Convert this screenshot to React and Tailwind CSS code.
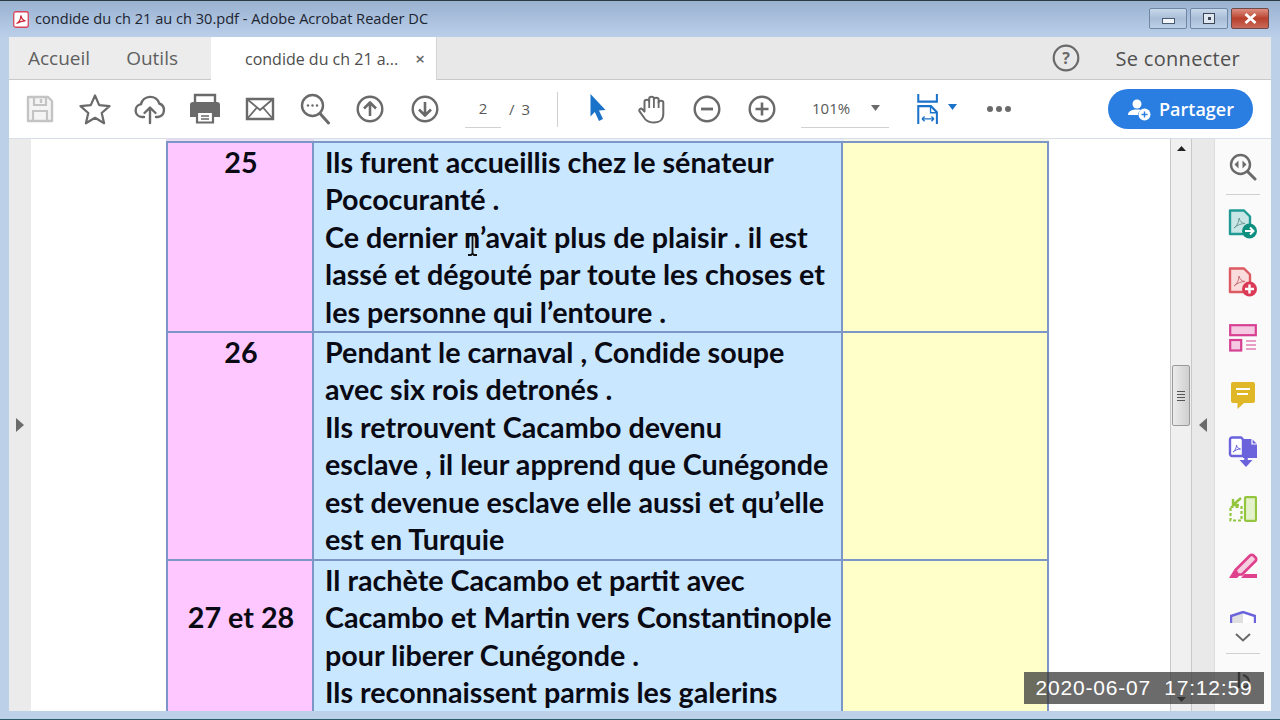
const G = '#6a6a6a';

function Slot({ children, w = 'w-[55px]' }) {
  return <div className={`${w} h-full flex items-center justify-center shrink-0`}>{children}</div>;
}

function Ico({ size = 32, vb = 32, children, className = '' }) {
  return (
    <svg width={size} height={size} viewBox={`0 0 ${vb} ${vb}`} fill="none" className={className}>
      {children}
    </svg>
  );
}

const SaveI = () => (
  <Ico>
    <path d="M4 4h20l4 4v20H4z" fill="#f4f4f4" stroke="#c4c4c4" strokeWidth="2.4" strokeLinejoin="round" />
    <path d="M10 4v8h12V4M9 28V18h14v10" stroke="#c4c4c4" strokeWidth="2.2" />
    <path d="M17 6v4" stroke="#c4c4c4" strokeWidth="2.4" />
  </Ico>
);
const StarI = () => (
  <Ico>
    <path d="M16 2.5l4.2 9.6 10.3 1-7.8 6.9 2.4 10.3L16 24.8l-9.1 5.5 2.4-10.3-7.8-6.9 10.3-1z" stroke={G} strokeWidth="2.2" strokeLinejoin="round" />
  </Ico>
);
const CloudI = () => (
  <Ico>
    <path d="M10 24H8a6.5 6.5 0 0 1-1-12.9 9.5 9.5 0 0 1 18.3-.6A7 7 0 0 1 24 24h-2" stroke={G} strokeWidth="2.4" strokeLinecap="round" />
    <path d="M16 30V15M10.5 20l5.5-5.5 5.5 5.5" stroke={G} strokeWidth="2.4" strokeLinecap="round" strokeLinejoin="round" />
  </Ico>
);
const PrintI = () => (
  <Ico>
    <path d="M6 9V2h20v7" stroke={G} strokeWidth="2.4" />
    <path d="M4 9h24a3 3 0 0 1 3 3v12h-6v-6H7v6H1V12a3 3 0 0 1 3-3z" fill={G} />
    <path d="M8 19h16v10.5H8z" fill="#fff" stroke={G} strokeWidth="2.2" />
    <path d="M12 23h8M12 26h8" stroke={G} strokeWidth="1.6" />
  </Ico>
);
const MailI = () => (
  <Ico>
    <path d="M3 6h26v20H3z" stroke={G} strokeWidth="2.4" />
    <path d="M3 6l13 11L29 6M3 26l10-11.5M29 26L19 14.5" stroke={G} strokeWidth="1.8" />
  </Ico>
);
const FindI = () => (
  <Ico>
    <circle cx="13.5" cy="12.5" r="10.5" stroke={G} strokeWidth="2.4" />
    <path d="M21 20.5L29.5 30" stroke={G} strokeWidth="3" strokeLinecap="round" />
    <circle cx="9" cy="12.5" r="1.2" fill={G} />
    <circle cx="13.5" cy="12.5" r="1.2" fill={G} />
    <circle cx="18" cy="12.5" r="1.2" fill={G} />
  </Ico>
);
const CircleI = ({ children }) => (
  <Ico>
    <circle cx="16" cy="16" r="12.3" stroke={G} strokeWidth="2.4" />
    {children}
  </Ico>
);
const UpI = () => (
  <CircleI>
    <path d="M16 23V9.5M10 15.5l6-6 6 6" stroke={G} strokeWidth="2.6" strokeLinejoin="round" />
  </CircleI>
);
const DownI = () => (
  <CircleI>
    <path d="M16 9v13.5M10 16.5l6 6 6-6" stroke={G} strokeWidth="2.6" strokeLinejoin="round" />
  </CircleI>
);
const MinusI = () => (
  <CircleI>
    <path d="M10 16h12" stroke={G} strokeWidth="2.8" />
  </CircleI>
);
const PlusI = () => (
  <CircleI>
    <path d="M9.5 16h13M16 9.5v13" stroke={G} strokeWidth="2.6" />
  </CircleI>
);
const ArrowI = () => (
  <Ico>
    <path d="M9.5 1L24.5 17l-6.5.5L22 26l-4 2-4.2-9-4.3 4.5z" fill="#1b72c9" />
  </Ico>
);
const HandI = () => (
  <svg width="28" height="29" viewBox="0 0 28 29" fill="none">
    <path
      d="M7 24C5 21 3 18.5 1.6 16.4C.5 14.5 2.8 12.8 4.3 14.2L6.5 16.5V6.5C6.5 4 11.2 4 11.2 6.5V3.5C11.2 1 15.9 1 15.9 3.5V4.5C15.9 2 20.6 2 20.6 4.5V7.5C20.6 5 25.3 5 25.3 7.5V19C25.3 24.5 21.5 27.5 16.5 27.5C12 27.5 9 26.5 7 24Z"
      stroke={G}
      strokeWidth="2"
      strokeLinejoin="round"
    />
    <path d="M11.2 6.5V13M15.9 4V13M20.6 7V13" stroke={G} strokeWidth="1.8" />
  </svg>
);
const FitI = () => (
  <svg width="22" height="30" viewBox="0 0 26 32" fill="none" preserveAspectRatio="none">
    <path d="M1.5 0v8h22V0" stroke="#1b72c9" strokeWidth="2.4" />
    <path d="M1.5 32V13h15l7 6.5V32" stroke="#1b72c9" strokeWidth="2.4" />
    <path d="M16 13v7h7.5" stroke="#1b72c9" strokeWidth="1.6" />
    <path d="M6 26.5h14M6 26.5l3-2.5M6 26.5L9 29M20 26.5L17 24M20 26.5L17 29" stroke="#1b72c9" strokeWidth="1.5" />
  </svg>
);
const Caret = ({ color = G }) => (
  <svg width="9" height="6" viewBox="0 0 9 6">
    <path d="M0 0h9L4.5 6z" fill={color} />
  </svg>
);

function WinBtn({ children }) {
  return (
    <div className="w-[38px] h-[21px] rounded-[2px] border border-[#6f87a4] bg-gradient-to-b from-[#c8d8ec] via-[#a9bdd6] to-[#bcd0e8] flex items-center justify-center">
      {children}
    </div>
  );
}

function TitleBar() {
  return (
    <div className="h-[36px] flex items-center shrink-0 pl-[13px] pr-[11px] bg-gradient-to-b from-[#99b2d0] to-[#bbcfea]">
      <svg width="16" height="17" viewBox="0 0 16 17" className="mr-[6px]">
        <rect x="0.75" y="0.75" width="14.5" height="15.5" rx="2" fill="#fff" stroke="#d8455a" strokeWidth="1.3" />
        <path d="M3.5 12.5c2.5-1 4.5-4.5 4.3-8 .8 3.5 2 5 4.7 5.3-3-.2-6 .8-9 2.7z" fill="none" stroke="#cc2233" strokeWidth="1.2" />
      </svg>
      <span className="text-[14.6px] text-[#1c2430] font-['Open_Sans',sans-serif]">condide du ch 21 au ch 30.pdf - Adobe Acrobat Reader DC</span>
      <div className="ml-auto flex items-start gap-[3px] mt-[-1px]">
        <WinBtn>
          <div className="w-[13px] h-[6px] bg-[#f2f5f9] border border-[#4a5a70] mt-[4px]" />
        </WinBtn>
        <WinBtn>
          <div className="w-[12px] h-[11px] bg-[#dfe7f1] border border-[#3d4756] flex items-center justify-center">
            <div className="w-[3px] h-[3px] bg-[#3d4756]" />
          </div>
        </WinBtn>
        <div className="w-[38px] h-[21px] rounded-[2px] border border-[#6e4a4a] bg-gradient-to-b from-[#dd8d80] via-[#b8402c] to-[#c96a58] flex items-center justify-center">
          <svg width="13" height="11" viewBox="0 0 13 11">
            <path d="M1.5 1l10 9M11.5 1l-10 9" stroke="#fff" strokeWidth="2.8" />
          </svg>
        </div>
      </div>
    </div>
  );
}

function TabBar() {
  return (
    <div className="h-[43px] shrink-0 flex bg-[#e8e8e8] border-b border-[#c9c9c9] font-['Open_Sans',sans-serif]">
      <div className="w-[202px] flex items-center pl-[19px] gap-[36px] text-[19px] text-[#5f5f5f] bg-[#ececec]">
        <span>Accueil</span>
        <span>Outils</span>
      </div>
      <div className="w-[226px] h-[43px] bg-white flex items-center pl-[34px] text-[16px] text-[#4d4d4d] border-r border-[#d4d4d4]">
        <span>condide du ch 21 a...</span>
        <span className="ml-[17px] text-[#666] text-[17px] leading-none font-semibold">×</span>
      </div>
      <div className="flex-1 flex items-center justify-end pr-[31px]">
        <svg width="28" height="28" viewBox="0 0 28 28" fill="none" className="mr-[36px]">
          <circle cx="14" cy="14" r="12.3" stroke={G} strokeWidth="2.2" />
          <text x="14" y="19.5" textAnchor="middle" fontSize="16" fontWeight="700" fill={G} fontFamily="Open Sans, sans-serif">?</text>
        </svg>
        <span className="text-[20px] text-[#4f4f4f] font-medium tracking-[0.3px] pt-[2px]">Se connecter</span>
      </div>
    </div>
  );
}

function Toolbar() {
  return (
    <div className="h-[59px] shrink-0 bg-white flex items-center pl-[3px] border-b border-[#d9dfe9] font-['Open_Sans',sans-serif] text-[#595959]">
      <Slot><SaveI /></Slot>
      <Slot><StarI /></Slot>
      <Slot><CloudI /></Slot>
      <Slot><PrintI /></Slot>
      <Slot><MailI /></Slot>
      <Slot><FindI /></Slot>
      <Slot><UpI /></Slot>
      <Slot><DownI /></Slot>
      <div className="ml-[13px] w-[36px] h-[37px] border-b border-[#d2d2d2] flex items-center justify-center text-[15px] shrink-0">2</div>
      <div className="ml-[8px] text-[15px] w-[48px] shrink-0 tracking-[1.5px]">/ 3</div>
      <div className="w-px h-[35px] bg-[#d0d0d0] shrink-0" />
      <div className="ml-[11px] flex h-full">
        <Slot><ArrowI /></Slot>
        <Slot><HandI /></Slot>
        <Slot><MinusI /></Slot>
        <Slot><PlusI /></Slot>
      </div>
      <div className="ml-[12px] w-[88px] h-[37px] border-b border-[#d2d2d2] flex items-center pl-[11px] text-[15px] shrink-0">
        <span>101%</span>
        <span className="ml-[21px] mb-[1px] flex"><Caret /></span>
      </div>
      <div className="ml-[28px] flex items-center shrink-0">
        <FitI />
        <span className="ml-[9px] mb-[4px] flex"><Caret color="#1b72c9" /></span>
      </div>
      <div className="ml-[30px] flex gap-[3px] shrink-0">
        <div className="w-[6px] h-[6px] rounded-full bg-[#6a6a6a]" />
        <div className="w-[6px] h-[6px] rounded-full bg-[#6a6a6a]" />
        <div className="w-[6px] h-[6px] rounded-full bg-[#6a6a6a]" />
      </div>
      <button className="ml-[97px] w-[145px] h-[40px] rounded-full bg-[#2a7de1] text-white flex items-center justify-center gap-[8px] text-[18px] font-semibold shrink-0">
        <svg width="24" height="24" viewBox="0 0 24 24">
          <circle cx="10" cy="7" r="4.5" fill="#fff" />
          <path d="M1 18c0-4 4-5.5 9-5.5 1.5 0 2.8.1 4 .5-2 1-3 3-3 5z" fill="#fff" />
          <circle cx="17.5" cy="17.5" r="6" fill="#fff" />
          <path d="M14.5 17.5h6M17.5 14.5v6" stroke="#2a7de1" strokeWidth="1.4" />
        </svg>
        <span>Partager</span>
      </button>
    </div>
  );
}

const rows = [
  {
    n: '25',
    h: 'h-[190px]',
    nClass: 'pt-[1px]',
    lines: ['Ils furent accueillis chez le sénateur', 'Pococuranté .', 'Ce dernier n’avait plus de plaisir . il est', 'lassé et dégouté par toute les choses et', 'les personne qui l’entoure .'],
  },
  {
    n: '26',
    h: 'h-[228px]',
    nClass: 'pt-[1px]',
    lines: ['Pendant le carnaval , Condide soupe', 'avec six rois detronés .', 'Ils retrouvent Cacambo devenu', 'esclave , il leur apprend que Cunégonde', 'est devenue esclave elle aussi et qu’elle', 'est en Turquie'],
  },
  {
    n: '27 et 28',
    h: 'h-[190px]',
    nClass: 'pt-[38px]',
    lines: ['Il rachète Cacambo et partit avec', 'Cacambo et Martin vers Constantinople', 'pour liberer Cunégonde .', 'Ils reconnaissent parmis les galerins'],
  },
];

function Table() {
  return (
    <div className="w-[883px] ml-[135px] shrink-0 font-['Lato',sans-serif] font-bold text-[28.7px] leading-[37.4px] text-[#0a0a14]">
      <div className="h-[2px] grid grid-cols-[148px_530px_205px]">
        <div className="bg-[#eadcf0]" />
        <div className="bg-[#e6eef8]" />
        <div className="bg-[#f6f6e6]" />
      </div>
      <div className="border-l-2 border-t-2 border-[#7d96c8]">
        {rows.map((r) => (
          <div key={r.n} className={`grid grid-cols-[146px_529px_206px] ${r.h} border-b-2 border-[#7d96c8]`}>
            <div className={`bg-[#ffc7ff] text-center border-r-2 border-[#7d96c8] pl-[2px] ${r.nClass}`}>{r.n}</div>
            <div className="bg-[#c9e7ff] border-r-2 border-[#7d96c8] pl-[11px] pt-[1px] whitespace-nowrap overflow-hidden">
              {r.lines.map((l) => (
                <div key={l}>{l}</div>
              ))}
            </div>
            <div className="bg-[#ffffca] border-r-2 border-[#7d96c8]" />
          </div>
        ))}
      </div>
    </div>
  );
}

const RailSlot = ({ h, children }) => <div className={`${h} shrink-0 flex items-center justify-center`}>{children}</div>;

function Rail() {
  return (
    <div className="w-[57px] shrink-0 bg-[#fbfafa] flex flex-col items-stretch overflow-hidden border-l border-[#dedede]">
      <RailSlot h="h-[55px]">
        <svg width="28" height="28" viewBox="0 0 28 28" fill="none">
          <circle cx="11.5" cy="11.5" r="9.5" stroke={G} strokeWidth="2.4" />
          <path d="M18.5 18.5L26 26" stroke={G} strokeWidth="3" strokeLinecap="round" />
          <path d="M9.5 7.5v8L5.5 11.5zM13.5 7.5v8l4-4z" fill={G} />
        </svg>
      </RailSlot>
      <div className="h-px bg-[#cfcfcf] mx-[11px] shrink-0" />
      <RailSlot h="h-[58px]">
        <svg width="30" height="30" viewBox="0 0 30 30" fill="none">
          <path d="M2 1.5h14l6 6V25H2z" fill="#c9e6e6" stroke="#1f9a94" strokeWidth="2.4" strokeLinejoin="round" />
          <path d="M6 19c3-2 5-6 5-10 1 3.5 2.5 5 6 5.5-4 0-7.5 1.5-11 4.5z" stroke="#6d9a9a" strokeWidth="1" />
          <circle cx="21.5" cy="22" r="7.5" fill="#0f8f80" />
          <path d="M17 22h8M22 18.5l3.5 3.5-3.5 3.5" stroke="#fff" strokeWidth="2" />
        </svg>
      </RailSlot>
      <RailSlot h="h-[57px]">
        <svg width="30" height="30" viewBox="0 0 30 30" fill="none">
          <path d="M2 1.5h14l6 6V25H2z" fill="#fbdcdc" stroke="#dc5a62" strokeWidth="2.4" strokeLinejoin="round" />
          <path d="M6 19c3-2 5-6 5-10 1 3.5 2.5 5 6 5.5-4 0-7.5 1.5-11 4.5z" stroke="#c87078" strokeWidth="1" />
          <circle cx="21.5" cy="22" r="7.5" fill="#da3a55" />
          <path d="M17 22h9M21.5 17.5v9" stroke="#fff" strokeWidth="2.4" />
        </svg>
      </RailSlot>
      <RailSlot h="h-[56px]">
        <svg width="28" height="28" viewBox="0 0 28 28" fill="none">
          <rect x="1.2" y="1.2" width="25.6" height="10" fill="#f5c9e2" stroke="#d63f92" strokeWidth="2.2" />
          <rect x="1.2" y="16" width="11" height="10.5" fill="#f5c9e2" stroke="#d63f92" strokeWidth="2.2" />
          <path d="M17 17h10M17 21h10M17 25h10" stroke="#d63f92" strokeWidth="1" />
        </svg>
      </RailSlot>
      <RailSlot h="h-[57px]">
        <svg width="26" height="28" viewBox="0 0 26 28">
          <path d="M3 1h20a2 2 0 0 1 2 2v17a2 2 0 0 1-2 2H14l-6.5 6v-6H3a2 2 0 0 1-2-2V3a2 2 0 0 1 2-2z" fill="#dfb727" />
          <path d="M6 8h14M7 13h11" stroke="#fff" strokeWidth="2" />
        </svg>
      </RailSlot>
      <RailSlot h="h-[57px]">
        <svg width="30" height="32" viewBox="0 0 30 32" fill="none">
          <path d="M2 3.5a2 2 0 0 1 2-2h9l2 2v16.5H4a2 2 0 0 1-2-2z" fill="#fff" stroke="#6a63dc" strokeWidth="2.4" />
          <path d="M15 3h9l5 5v14H15z" fill="#6a63dc" />
          <path d="M24 3v5h5" stroke="#fff" strokeWidth="1.2" />
          <path d="M5 16c2-1.5 3.5-4 3.5-7 .6 2.4 1.6 3.5 4 4-2.5 0-5 1-7.5 3z" stroke="#6a63dc" strokeWidth="1" />
          <path d="M18 20v7" stroke="#6a63dc" strokeWidth="3.5" />
          <path d="M11.5 24h13L18 31z" fill="#6a63dc" />
        </svg>
      </RailSlot>
      <RailSlot h="h-[57px]">
        <svg width="28" height="26" viewBox="0 0 28 26" fill="none">
          <rect x="16" y="1.2" width="11" height="23.6" rx="1" fill="#e4f2cc" stroke="#93c53e" strokeWidth="2.2" />
          <path d="M1.5 11h11v13.5h-11z" stroke="#93c53e" strokeWidth="2.2" strokeDasharray="3 2" />
          <path d="M12 2L4.5 8.5M4 3v6h6" stroke="#93c53e" strokeWidth="2.4" />
        </svg>
      </RailSlot>
      <RailSlot h="h-[57px]">
        <svg width="30" height="26" viewBox="0 0 30 26" fill="none">
          <path d="M7.5 17L22 2.5c1-1 2.5-1 3.5 0l2 2c1 1 1 2.5 0 3.5L14 21.5H9.5z" fill="#f5cfe0" stroke="#e0418c" strokeWidth="2.6" />
          <path d="M6 17l-5 8h8l3-3zM13 25l3.5-4H29v4z" fill="#e0418c" />
        </svg>
      </RailSlot>
      <div className="h-[35px] shrink-0 flex justify-center items-start pt-[17px]">
        <svg width="26" height="12" viewBox="0 0 26 12" fill="none" className="shrink-0">
          <path d="M13 1L25 5V12H13z" fill="#fff" />
          <path d="M13 1L1 5V12H13z" fill="#dfdfdf" />
          <path d="M1 12V5L13 1l12 4V12" stroke="#6a63dc" strokeWidth="2.4" />
        </svg>
      </div>
      <RailSlot h="h-[16px]">
        <svg width="16" height="9" viewBox="0 0 16 9" fill="none">
          <path d="M1 1l7 6.5L15 1" stroke={G} strokeWidth="2" />
        </svg>
      </RailSlot>
      <div className="h-px bg-[#cfcfcf] mx-[11px] mt-[8px] shrink-0" />
      <div className="mt-[18px] flex justify-center">
        <svg width="18" height="22" viewBox="0 0 18 22" fill="none">
          <path d="M5 0v16" stroke="#333" strokeWidth="2.4" />
          <path d="M9 3c3 1 6 3 6 7s-3 5-6 5" stroke="#333" strokeWidth="2" />
        </svg>
      </div>
    </div>
  );
}

export default function App() {
  return (
    <div className="relative w-[1280px] h-[720px] overflow-hidden bg-[#bcd0e8]">
      <div className="h-full flex flex-col pb-[8px] border-t border-[#2a3a40] border-b border-b-[#2d5a66]">
        <TitleBar />
        <div className="flex-1 min-h-0 flex flex-col mx-[9px] overflow-hidden">
          <TabBar />
          <Toolbar />
          <div className="flex-1 min-h-0 flex">
            <div className="w-[22px] shrink-0 bg-[#ebebeb] flex items-center justify-center">
              <svg width="8" height="14" viewBox="0 0 8 14"><path d="M0 0l8 7-8 7z" fill="#6b6b6b" /></svg>
            </div>
            <div className="flex-1 min-w-0 bg-white overflow-hidden">
              <Table />
            </div>
            <div className="w-[22px] shrink-0 bg-[#f0f0f0] border-x border-[#c8c8c8] flex flex-col items-center">
              <svg width="9" height="5" viewBox="0 0 9 5" className="mt-[7px]"><path d="M0 5h9L4.5 0z" fill="#222" /></svg>
              <div className="mt-[214px] w-[18px] h-[61px] rounded-[2px] border border-[#9a9a9a] bg-gradient-to-r from-[#ececec] to-[#cfcfcf] flex flex-col items-center justify-center gap-[2px]">
                <div className="w-[8px] h-px bg-[#555]" />
                <div className="w-[8px] h-px bg-[#555]" />
                <div className="w-[8px] h-px bg-[#555]" />
                <div className="w-[8px] h-px bg-[#555]" />
              </div>
              <svg width="9" height="5" viewBox="0 0 9 5" className="mt-auto mb-[9px]"><path d="M0 0h9L4.5 5z" fill="#222" /></svg>
            </div>
            <div className="w-[22px] shrink-0 bg-[#e9e9e9] flex items-center justify-center">
              <svg width="8" height="14" viewBox="0 0 8 14"><path d="M8 0L0 7l8 7z" fill="#6b6b6b" /></svg>
            </div>
            <Rail />
          </div>
        </div>
      </div>
      <svg width="13" height="23" viewBox="0 0 13 23" className="absolute left-[466px] top-[233px]" fill="none">
        <path d="M2 1h3l1.5 1.5L8 1h3M6.5 2v19M2 22h3l1.5-1.5L8 22h3" stroke="#111" strokeWidth="1.8" />
      </svg>
      <div className="absolute left-[1024px] top-[672px] w-[240px] h-[32px] bg-[#3a3a3a]/75 text-white flex items-center justify-center text-[21px] font-['Liberation_Sans',sans-serif] tracking-[0.8px] whitespace-pre">
        2020-06-07  17:12:59
      </div>
    </div>
  );
}
